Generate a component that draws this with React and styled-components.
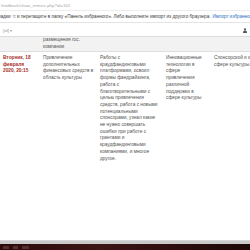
import React from "react";
import styled, { createGlobalStyle } from "styled-components";

const Global = createGlobalStyle`
  html, body { margin: 0; padding: 0; background: #fff; }
  body { font-family: "Liberation Sans", Arial, sans-serif; }
`;

const Screen = styled.div`
  width: 250px;
  height: 250px;
  overflow: hidden;
  display: flex;
  flex-direction: column;
  background: #fff;
`;

const AddressBar = styled.div`
  height: 10px;
  flex: none;
  display: flex;
  align-items: center;
  padding-left: 1px;
  font-size: 4.4px;
  color: #a8a8a8;
  border-bottom: 1px solid #ececec;
  white-space: nowrap;
`;

const InfoBar = styled.div`
  height: 11px;
  flex: none;
  display: flex;
  align-items: center;
  font-size: 4.6px;
  color: #3a3a3a;
  white-space: nowrap;
  border-bottom: 1px solid #e4e4e4;
  margin-left: -2px;
`;

const Link = styled.span`
  color: #2c6fbf;
  margin-left: 2px;
`;

const Toolbar = styled.div`
  height: 14px;
  flex: none;
  display: flex;
  align-items: center;
  justify-content: space-between;
  padding: 2px 3px 0 3px;
  font-size: 4.4px;
  color: #9a9a9a;
  border-bottom: 1px solid #dcdcdc;
  box-sizing: border-box;
`;

const Row = styled.div`
  display: grid;
  grid-template-columns: 40px 57px 66px 48px 110px;
  padding-left: 3px;
  width: 330px;
  flex: none;
  background: ${(p) => (p.$shaded ? "#f2f2f2" : "#fff")};
  border-bottom: ${(p) => (p.$shaded ? "1px solid #dedede" : "none")};
  height: ${(p) => p.$height || "auto"};
  align-items: ${(p) => (p.$shaded ? "end" : "start")};
  padding-top: ${(p) => (p.$shaded ? "0" : "3px")};
  padding-bottom: ${(p) => (p.$shaded ? "4px" : "0")};
  overflow: hidden;
  box-sizing: border-box;
`;

const Cell = styled.div`
  font-size: 4.75px;
  line-height: 6.7px;
  color: #555;
  padding-right: 5px;
  word-wrap: break-word;
`;

const DateCell = styled(Cell)`
  color: #a8302c;
  font-weight: bold;
  padding-right: 10px;
`;

const Spacer = styled.div`
  flex: 1;
`;

const ScrollEdge = styled.div`
  height: 3px;
  flex: none;
  background: #c9c9c9;
  border-top: 1px solid #d8d8d8;
`;

const Taskbar = styled.div`
  height: 6px;
  flex: none;
  display: flex;
  align-items: center;
  gap: 4px;
  padding-left: 3px;
  background: linear-gradient(90deg, #2a0c0c 0%, #3d1414 40%, #1c0707 100%);
`;

const TaskItem = styled.span`
  width: ${(p) => p.$w}px;
  height: 3px;
  background: #6a3b3b;
  opacity: 0.7;
`;

function UserIcon() {
  return (
    <svg width="4" height="5" viewBox="0 0 4 5">
      <circle cx="2" cy="1.3" r="1.1" fill="#555" />
      <path d="M0 5 C0 3 1 2.6 2 2.6 C3 2.6 4 3 4 5 Z" fill="#555" />
    </svg>
  );
}

export default function App() {
  return (
    <>
      <Global />
      <Screen>
        <AddressBar>feedback/show_entries.php?id=162</AddressBar>
        <InfoBar>
          ладки ☆ и перетащите в папку «Панель избранного». Либо выполните импорт из другого браузера.
          <Link>Импорт избранного</Link>
        </InfoBar>
        <Toolbar>
          <span>[id] ▾</span>
          <UserIcon />
        </Toolbar>
        <Row $shaded $height="15px">
          <Cell />
          <Cell>
            размещения гос.
            <br />
            компании
          </Cell>
          <Cell />
          <Cell />
          <Cell />
        </Row>
        <Row>
          <DateCell>Вторник, 18 февраля 2020, 20:15</DateCell>
          <Cell>Привлечение дополнительных финансовых средств в область культуры</Cell>
          <Cell>
            Работы с краудфандинговыми платформами, освоил формы фандрайзинга, работа с
            благотворительными с целью привлечения средств, работа с новыми потенциальными
            спонсорами, узнал какие не нужно совершать ошибки при работе с грантами и
            краудфандинговыми компаниями, и многое другое.
          </Cell>
          <Cell>Инновационные технологии в сфере привлечения различной поддержки в сфере культуры</Cell>
          <Cell>Спонсорской и информационной поддержки в сфере культуры.</Cell>
        </Row>
        <Spacer />
        <ScrollEdge />
        <Taskbar>
          <TaskItem $w={6} />
          <TaskItem $w={5} />
          <TaskItem $w={7} />
        </Taskbar>
      </Screen>
    </>
  );
}
